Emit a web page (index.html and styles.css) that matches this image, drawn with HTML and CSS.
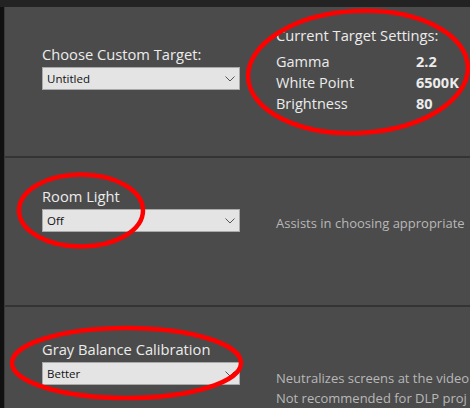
FILE: index.html
```html
<!DOCTYPE html>
<html>
<head>
<meta charset="utf-8">
<link rel="stylesheet" href="styles.css">
</head>
<body>
<div class="topbar"></div>
<div class="main">
  <div class="edge"></div>
  <div class="panel">
    <section class="section s1">
      <div class="left">
        <div class="label">Choose Custom Target:</div>
        <div class="select"><span>Untitled</span><svg class="chev" width="10" height="6" viewBox="0 0 10 6"><path d="M0.5 0.5 L5 5 L9.5 0.5" fill="none" stroke="#555" stroke-width="1"/></svg></div>
      </div>
      <div class="right">
        <div class="title">Current Target Settings:</div>
        <div class="row"><span class="k">Gamma</span><span class="v">2.2</span></div>
        <div class="row"><span class="k">White Point</span><span class="v">6500K</span></div>
        <div class="row"><span class="k">Brightness</span><span class="v">80</span></div>
      </div>
    </section>
    <section class="section s2">
      <div class="left">
        <div class="label">Room Light</div>
        <div class="select"><span>Off</span><svg class="chev" width="10" height="6" viewBox="0 0 10 6"><path d="M0.5 0.5 L5 5 L9.5 0.5" fill="none" stroke="#555" stroke-width="1"/></svg></div>
      </div>
      <div class="desc">
        <p>Assists in choosing appropriate</p>
      </div>
    </section>
    <section class="section s3">
      <div class="left">
        <div class="label">Gray Balance Calibration</div>
        <div class="select"><span>Better</span><svg class="chev" width="10" height="6" viewBox="0 0 10 6"><path d="M0.5 0.5 L5 5 L9.5 0.5" fill="none" stroke="#555" stroke-width="1"/></svg></div>
      </div>
      <div class="desc">
        <p>Neutralizes screens at the video</p>
        <p>Not recommended for DLP proj</p>
      </div>
    </section>
  </div>
</div>
<svg class="marks" width="470" height="408" viewBox="0 0 470 408">
  <ellipse cx="358" cy="72" rx="110" ry="61" transform="rotate(-3 358 72)" fill="none" stroke="#f00" stroke-width="4.5"/>
  <ellipse cx="81" cy="210.5" rx="62" ry="36" fill="none" stroke="#f00" stroke-width="4.5"/>
  <ellipse cx="126.5" cy="363" rx="114.5" ry="35" fill="none" stroke="#f00" stroke-width="4.5"/>
</svg>
</body>
</html>
```
FILE: styles.css
```css
html, body {
  margin: 0;
  padding: 0;
  width: 470px;
  height: 408px;
  overflow: hidden;
  background: #4b4b4b;
  font-family: "Open Sans", "Noto Sans", sans-serif;
}
.topbar {
  height: 7px;
  background: #232323;
}
.main {
  display: flex;
  height: 401px;
}
.edge {
  width: 4px;
  flex: none;
  background: #111;
  border-right: 1px solid #3a3a3a;
}
.panel {
  flex: 1;
  min-width: 0;
  overflow: hidden;
}
.section {
  display: flex;
  padding-left: 37px;
  border-bottom: 2px solid #343434;
  box-sizing: border-box;
  white-space: nowrap;
}
.s1 { height: 151px; }
.s2 { height: 149px; }
.s3 { height: 110px; border-bottom: none; }
.left {
  width: 198px;
  flex: none;
}
.label {
  color: #ececec;
  font-size: 14.7px;
  line-height: 20px;
  margin-bottom: 3px;
}
.select {
  height: 23px;
  box-sizing: border-box;
  border: 1px solid #a9a9a9;
  background: #e4e4e4;
  display: flex;
  align-items: center;
  justify-content: space-between;
  padding: 0 4px 0 4px;
  font-size: 11.5px;
  color: #111;
}
.chev { margin-right: 0; }
.s1 .left { padding-top: 37px; }
.s2 .left { padding-top: 28px; }
.s3 .left { padding-top: 32px; }
.right {
  margin-left: 36px;
  padding-top: 18px;
  color: #ececec;
}
.title {
  font-size: 14.7px;
  line-height: 20px;
  margin-bottom: 6px;
}
.row {
  display: flex;
  font-size: 14.5px;
  line-height: 21px;
}
.k { width: 140px; }
.v { font-weight: 700; }
.desc {
  margin-left: 36px;
  color: #b8b8b8;
  font-size: 13px;
  line-height: 20px;
}
.desc p { margin: 0; }
.s2 .desc { padding-top: 55px; }
.s3 .desc { padding-top: 61px; }
.marks {
  position: absolute;
  left: 0;
  top: 0;
  pointer-events: none;
}
```
